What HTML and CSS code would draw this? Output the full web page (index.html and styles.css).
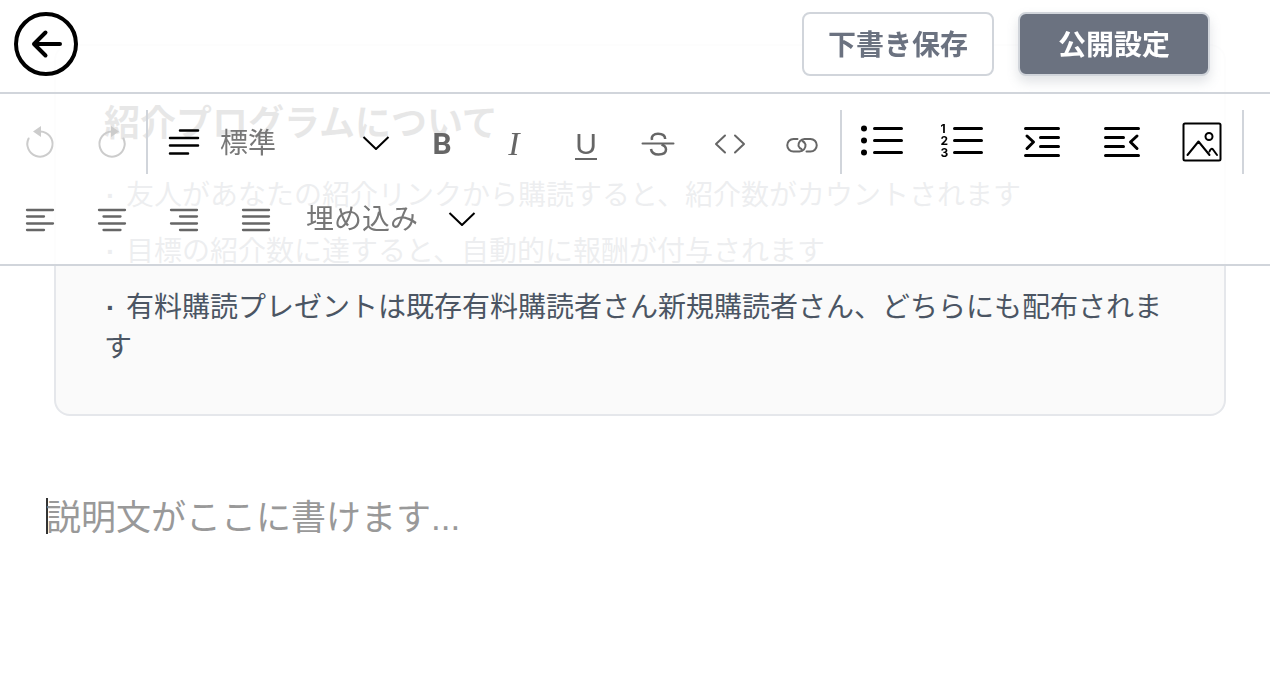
FILE: index.html
```html
<!DOCTYPE html>
<html lang="ja">
<head>
<meta charset="utf-8">
<meta name="viewport" content="width=device-width, initial-scale=1">
<title>説明文の編集</title>
<link rel="stylesheet" href="styles.css">
</head>
<body>
<div class="topbar">
  <header class="header">
    <button class="back" type="button" aria-label="戻る">
      <svg viewBox="0 0 64 64" width="64" height="64"><circle cx="32" cy="32" r="30"/><path d="M46 32H20M31.500 20.500L20 32L31.500 43.500"/></svg>
    </button>
    <div class="actions">
      <button class="btn" type="button">下書き保存</button>
      <button class="btn btn-primary" type="button">公開設定</button>
    </div>
  </header>

  <div class="toolbar" role="toolbar" aria-label="書式">
    <div class="group">
      <button class="tool history" type="button" aria-label="元に戻す" disabled>
        <svg class="icon" viewBox="0 0 48 48"><path d="M12.600 20.500A12.600 12.600 0 1 0 24.500 13.400"/><path class="solid" d="M17 13.500L25 8V19Z"/></svg>
      </button>
      <button class="tool history" type="button" aria-label="やり直す" disabled>
        <svg class="icon" viewBox="0 0 48 48"><path d="M35.400 20.500A12.600 12.600 0 1 1 23.500 13.400"/><path class="solid" d="M31 13.500L23 8V19Z"/></svg>
      </button>
    </div>
    <span class="divider"></span>
    <label class="dropdown block-type">
      <svg class="icon-paragraph" viewBox="0 0 32 32"><path d="M12 4.500H30M2 12H30M2 19.500H30M2 27.500H20"/></svg>
      <select aria-label="段落の種類"><option>標準</option></select>
      <svg class="chevron" viewBox="0 0 28 16"><path d="M1.500 3L14 15L26.500 3"/></svg>
    </label>
    <div class="group">
      <button class="tool" type="button" aria-label="太字"><span class="letter bold">B</span></button>
      <button class="tool" type="button" aria-label="斜体"><span class="letter italic">I</span></button>
      <button class="tool" type="button" aria-label="下線"><span class="letter underline">U</span></button>
      <button class="tool" type="button" aria-label="取り消し線">
        <svg class="icon" viewBox="0 0 48 48"><path d="M8.500 25.500H39.500"/><path class="mid" d="M18 22C17 18 20 15.800 24 15.800C28.500 15.800 31 17.500 31.200 21M17 31C17.500 35 20.500 36.500 24.500 36.500C29 36.500 32 35 32 31.500C32 28.500 30.500 27.500 27.500 26.500"/></svg>
      </button>
      <button class="tool" type="button" aria-label="コード">
        <svg class="icon" viewBox="0 0 48 48"><path d="M19 17.500L10 26L19 34.500M29 17.500L38 26L29 34.500"/></svg>
      </button>
      <button class="tool" type="button" aria-label="リンク">
        <svg class="icon" viewBox="0 0 48 48"><path d="M19.500 21H15.500A6.250 6.250 0 0 0 15.500 33.500H21.500A6.250 6.250 0 0 0 27.500 26.500Q26.500 24 24.500 23M28.500 33.500H32.500A6.250 6.250 0 0 0 32.500 21H26.500A6.250 6.250 0 0 0 20.500 28Q21.500 30.500 23.500 31"/></svg>
      </button>
    </div>
    <span class="divider divider-spaced"></span>
    <div class="group insert">
      <button class="tool wide" type="button" aria-label="箇条書き">
        <svg class="icon" viewBox="0 0 48 48"><g class="solid"><circle cx="6" cy="10.500" r="3"/><circle cx="6" cy="22.500" r="3"/><circle cx="6" cy="34.500" r="3"/></g><path d="M16.500 10.500H43.500M16.500 22.500H43.500M16.500 34.500H43.500"/></svg>
      </button>
      <button class="tool wide" type="button" aria-label="番号付きリスト">
        <svg class="icon" viewBox="0 0 48 48"><g class="digits"><text x="2.500" y="15">1</text><text x="2.500" y="27">2</text><text x="2.500" y="39">3</text></g><path d="M16.500 10.500H43.500M16.500 22.500H43.500M16.500 34.500H43.500"/></svg>
      </button>
      <button class="tool wide" type="button" aria-label="インデント">
        <svg class="icon" viewBox="0 0 48 48"><path d="M7.500 10.500H40.500M22.500 19.500H40.500M22.500 28.500H40.500M7.500 37.500H40.500"/><path d="M9 18L15.500 24L9 30.500"/></svg>
      </button>
      <button class="tool wide" type="button" aria-label="インデント解除">
        <svg class="icon" viewBox="0 0 48 48"><path d="M7.500 10.500H40.500M7.500 19.500H25.500M7.500 28.500H25.500M7.500 37.500H40.500"/><path d="M39 18L32.500 24L39 30.500"/></svg>
      </button>
      <button class="tool wide" type="button" aria-label="画像">
        <svg class="icon thin" viewBox="0 0 48 48"><rect x="5.500" y="5.500" width="37" height="37" rx="1.500"/><circle cx="31" cy="18.500" r="3.500"/><path d="M9.500 37L20.500 23.500L31.500 37M31.500 33.500Q33 29.500 35 31.500L39 37"/></svg>
      </button>
    </div>
    <span class="divider divider-end"></span>
    <div class="group align">
      <button class="tool" type="button" aria-label="左揃え">
        <svg class="icon" viewBox="0 0 48 48"><path d="M11 16H37M11 22.500H28M11 29.500H37M11 36H28"/></svg>
      </button>
      <button class="tool" type="button" aria-label="中央揃え">
        <svg class="icon" viewBox="0 0 48 48"><path d="M11 16H37M15.500 22.500H32.500M11 29.500H37M15.500 36H32.500"/></svg>
      </button>
      <button class="tool" type="button" aria-label="右揃え">
        <svg class="icon" viewBox="0 0 48 48"><path d="M11 16H37M20 22.500H37M11 29.500H37M20 36H37"/></svg>
      </button>
      <button class="tool" type="button" aria-label="両端揃え">
        <svg class="icon" viewBox="0 0 48 48"><path d="M11 16H37M11 22.500H37M11 29.500H37M11 36H37"/></svg>
      </button>
    </div>
    <label class="dropdown embed">
      <select aria-label="埋め込み"><option>埋め込み</option></select>
      <svg class="chevron" viewBox="0 0 28 16"><path d="M1.500 3L14 15L26.500 3"/></svg>
    </label>
  </div>
</div>

<main class="content">
  <section class="card">
    <h2 class="card-title">紹介プログラムについて</h2>
    <ul class="notes">
      <li><span class="dot">·</span>友人があなたの紹介リンクから購読すると、紹介数がカウントされます</li>
      <li><span class="dot">·</span>目標の紹介数に達すると、自動的に報酬が付与されます</li>
      <li><span class="dot">·</span>有料購読プレゼントは既存有料購読者さん新規購読者さん、どちらにも配布されます</li>
    </ul>
  </section>
  <div class="editor">
    <span class="caret"></span>
    <textarea aria-label="説明文" placeholder="説明文がここに書けます..."></textarea>
  </div>
</main>
</body>
</html>
```
FILE: styles.css
```css
* {
  box-sizing: border-box;
}

body {
  margin: 0;
  background: #fff;
  font-family: "Liberation Sans", "Noto Sans CJK JP", sans-serif;
  font-size: 28px;
  line-height: 40px;
}

button,
select,
textarea {
  margin: 0;
  padding: 0;
  border: 0;
  background: none;
  font: inherit;
}

svg {
  display: block;
  flex: none;
  fill: none;
  stroke: currentColor;
  stroke-width: 2;
  stroke-linecap: round;
  stroke-linejoin: round;
}

.topbar {
  position: fixed;
  top: 0;
  left: 0;
  right: 0;
  z-index: 10;
  background: rgba(255, 255, 255, 0.9);
}

.header {
  display: flex;
  align-items: center;
  justify-content: space-between;
  padding: 12px 60px 16px 14px;
  border-bottom: 2px solid #d1d5db;
}

.back {
  color: #000;
}

.back svg {
  stroke-width: 4;
}

.actions {
  display: flex;
  gap: 24px;
}

.btn {
  min-width: 192px;
  height: 64px;
  padding: 4px 24px 0;
  border: 2px solid #d1d5db;
  border-radius: 8px;
  background: #fff;
  color: #6b7280;
  font-weight: 700;
}

.btn-primary {
  background: #6b7280;
  color: #fff;
  box-shadow: 0 6px 12px rgba(107, 114, 128, 0.2);
}

.toolbar {
  display: flex;
  flex-wrap: wrap;
  row-gap: 12px;
  padding: 16px 4px 14px;
  border-bottom: 2px solid #d1d5db;
}

.group {
  display: flex;
  color: #666;
}

.insert {
  color: #000;
}

.insert svg {
  stroke-width: 3;
}

.insert .thin {
  stroke-width: 2;
}

.align svg {
  stroke-width: 2.3;
}

.tool {
  display: flex;
  align-items: center;
  justify-content: center;
  width: 72px;
  height: 64px;
  color: inherit;
}

.wide {
  width: 80px;
}

.history {
  color: #ccc;
}

.icon {
  width: 48px;
  height: 48px;
}

.icon .mid {
  stroke-width: 2.5;
  stroke-linecap: butt;
}

.icon .solid {
  fill: currentColor;
  stroke: none;
}

.digits {
  fill: currentColor;
  stroke: none;
  font: 700 12px Inter, sans-serif;
}

.letter {
  padding-top: 4px;
  font-size: 30px;
  line-height: 32px;
}

.bold {
  font-family: Roboto, sans-serif;
  font-weight: 700;
}

.italic {
  font-family: "Liberation Serif", serif;
  font-size: 34px;
  font-style: italic;
}

.underline {
  padding-top: 6px;
  border-bottom: 2px solid;
  line-height: 28px;
}

.divider {
  width: 2px;
  margin-left: -2px;
  background: #d1d5db;
}

.divider-spaced {
  margin-left: 2px;
}

.divider-end {
  margin-left: 0;
}

.dropdown {
  display: flex;
  align-items: center;
  height: 64px;
  color: #000;
}

.dropdown select {
  appearance: none;
  height: 44px;
  padding-top: 4px;
  color: #777;
}

.block-type {
  gap: 20px;
  width: 258px;
  padding: 0 16px 0 20px;
}

.block-type select {
  flex: 1;
}

.embed {
  gap: 29px;
  padding: 0 14px;
}

.icon-paragraph {
  width: 32px;
  height: 32px;
  stroke-width: 2.5;
}

.chevron {
  width: 28px;
  height: 16px;
  stroke-linecap: butt;
  pointer-events: none;
}

.content {
  padding: 44px 44px 0 46px;
}

.card {
  margin: 0 0 0 8px;
  padding: 50px 48px 46px;
  border: 2px solid #e5e7eb;
  border-radius: 16px;
  background: #fafafa;
}

.card-title {
  margin: 0 0 24px;
  color: #111;
  font-size: 36px;
  line-height: 56px;
}

.notes {
  display: flex;
  flex-direction: column;
  gap: 16px;
  margin: 0;
  padding: 0;
  color: #4b5563;
  list-style: none;
}

.dot {
  display: inline-block;
  width: 22px;
  padding-left: 2px;
  font-weight: 700;
}

.editor {
  display: flex;
  margin-top: 78px;
}

.caret {
  width: 2px;
  height: 36px;
  margin: 4px -2px 0 0;
  background: #333;
}

textarea {
  flex: 1;
  height: 120px;
  outline: 0;
  resize: none;
  font-size: 35px;
  line-height: 48px;
}

textarea::placeholder {
  color: #999;
}
```
